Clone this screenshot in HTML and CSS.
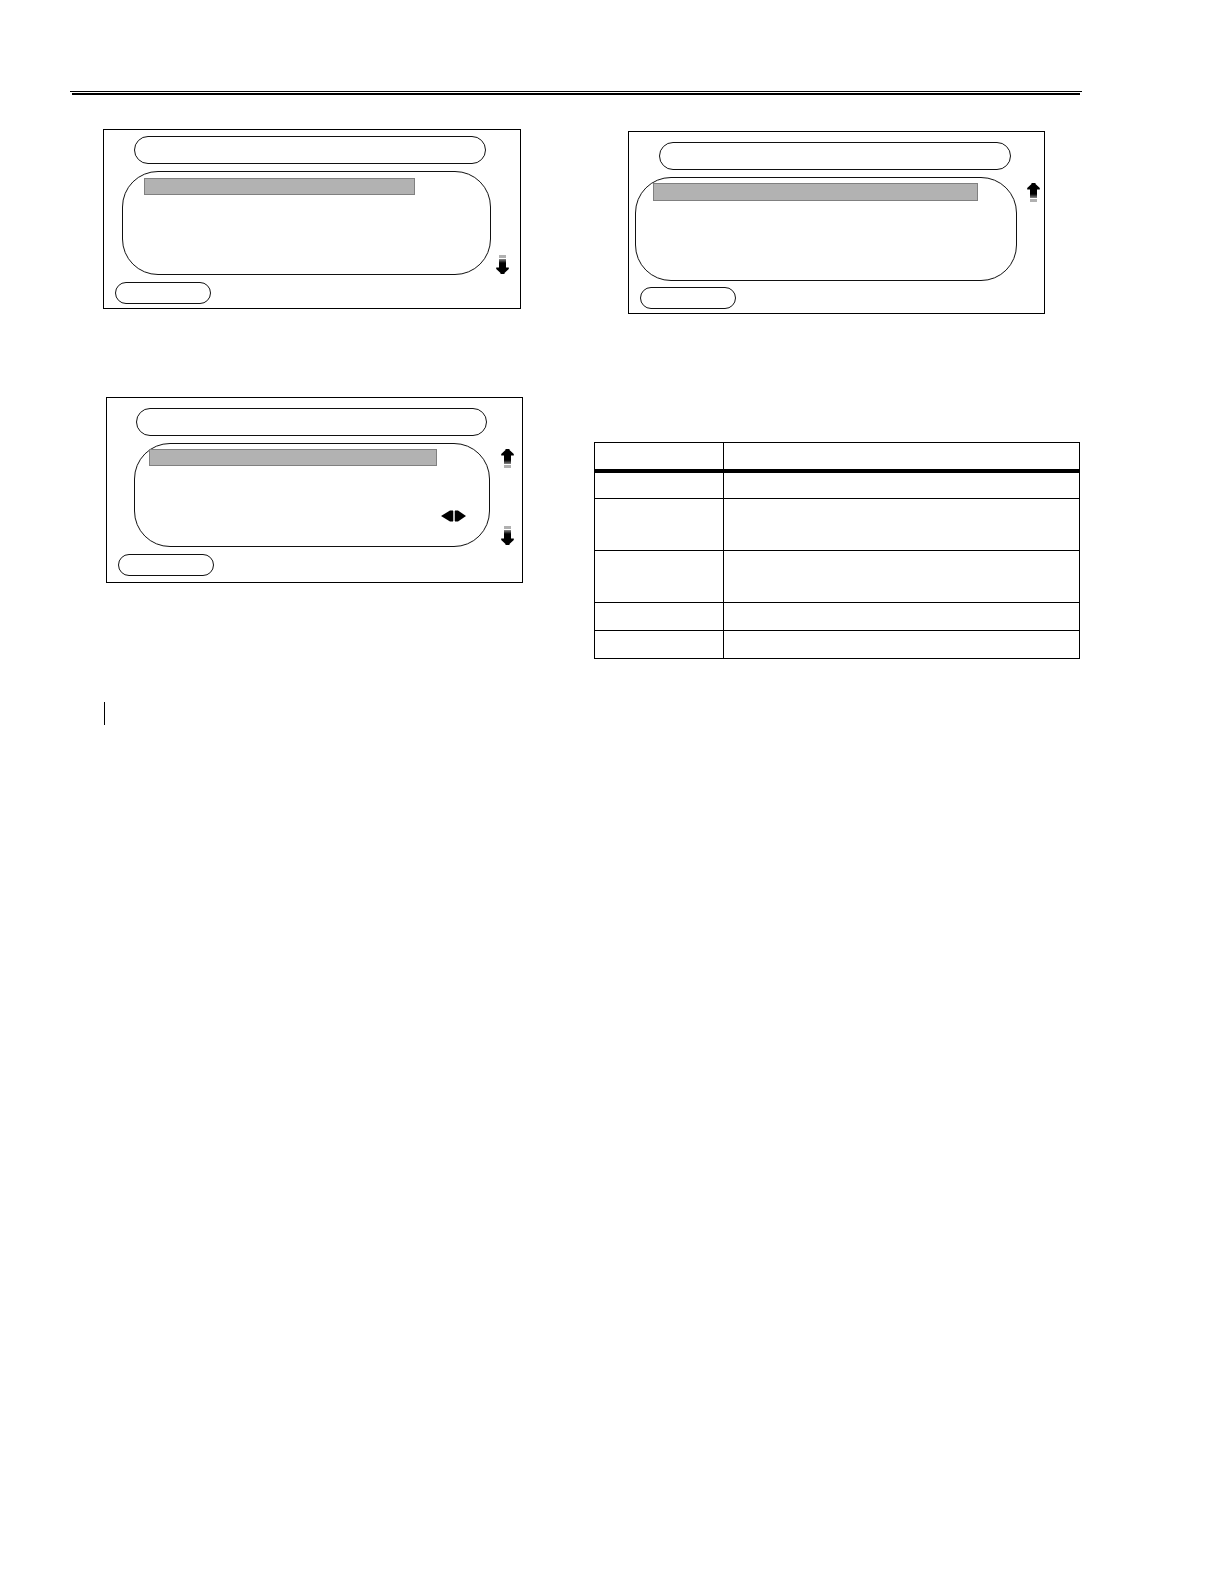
FILE: index.html
```html
<!DOCTYPE html>
<html lang="en">
<head>
    <meta charset="UTF-8">
    <meta name="viewport" content="width=device-width, initial-scale=1.0">
    <title>Display menus</title>
    <link rel="stylesheet" href="styles.css">
</head>

<body>
    <!-- shared arrow shapes -->
    <svg class="symbols" aria-hidden="true">
      <linearGradient id="fade" x1="0" y1="0" x2="0" y2="1">
        <stop offset="0" stop-color="#888"/>
        <stop offset="1" stop-color="#000"/>
      </linearGradient>
      <symbol id="down" viewBox="0 0 13 19">
        <rect x="3" y="0" width="7" height="3" fill="#b0b0b0"/>
        <rect x="3" y="4" width="7" height="4" fill="url(#fade)"/>
        <path d="M3 8H10V12.5H12.8V14L8.5 18V19H4.5V18L0.2 14V12.5H3Z"/>
      </symbol>
      <symbol id="up" viewBox="0 0 13 19">
        <g transform="rotate(180 6.5 9.5)">
          <rect x="3" y="0" width="7" height="3" fill="#b0b0b0"/>
          <rect x="3" y="4" width="7" height="4" fill="url(#fade)"/>
          <path d="M3 8H10V12.5H12.8V14L8.5 18V19H4.5V18L0.2 14V12.5H3Z"/>
        </g>
      </symbol>
    </svg>

    <header class="rule"></header>

    <main>
        <section class="left">
          <div class="panel first">
            <div class="title"></div>
            <div class="row">
              <div class="screen">
                <div class="highlight"></div>
              </div>
              <div class="arrows">
                <svg class="arrow bottom"><use href="#down"/></svg>
              </div>
            </div>
            <button class="softkey" type="button" aria-label="Close"></button>
          </div>

          <div class="panel third">
            <div class="title"></div>
            <div class="row">
              <div class="screen">
                <div class="highlight"></div>
                <svg class="sideways" viewBox="0 0 25 12">
                  <path d="M0 6L9 0.5H12V11.5H9ZM25 6L17 0.5H14V11.5H17Z"/>
                  <path d="M12 1H14V11H12Z" fill="#bbb"/>
                </svg>
              </div>
              <div class="arrows">
                <svg class="arrow"><use href="#up"/></svg>
                <svg class="arrow bottom"><use href="#down"/></svg>
              </div>
            </div>
            <button class="softkey" type="button" aria-label="Close"></button>
          </div>

          <div class="changebar"></div>
        </section>

        <section class="right">
          <div class="panel second">
            <div class="title"></div>
            <div class="row">
              <div class="screen">
                <div class="highlight"></div>
              </div>
              <div class="arrows">
                <svg class="arrow"><use href="#up"/></svg>
              </div>
            </div>
            <button class="softkey" type="button" aria-label="Close"></button>
          </div>

          <table>
            <thead>
              <tr><th class="name"></th><th></th></tr>
            </thead>
            <tbody>
              <tr class="short"><td></td><td></td></tr>
              <tr class="tall"><td></td><td></td></tr>
              <tr class="tall"><td></td><td></td></tr>
              <tr><td></td><td></td></tr>
              <tr><td></td><td></td></tr>
            </tbody>
          </table>
        </section>
    </main>
</body>
</html>
```
FILE: styles.css
```css
* {
  box-sizing: border-box;
}
body {
  margin: 0;
  padding: 91px 142px 0 70px;
  background-color: #fff;
  font-family: "Liberation Sans", Arial, sans-serif;
}

.symbols {
  position: absolute;
  width: 0;
  height: 0;
}

/* thin line over a thicker one */
.rule {
  border-top: 1px solid #000;
  padding: 1px 2px 0;
}
.rule:after {
  content: "";
  display: block;
  border-top: 2px solid #000;
}

main {
  display: grid;
  grid-template-columns: 421fr 486fr;
  column-gap: 70px;
  padding: 34px 2px 0 33px;
}

.panel {
  display: flex;
  flex-direction: column;
  border: 1px solid #000;
}
.title {
  height: 28px;
  border: 1px solid #111;
  border-radius: 14px;
}
.row {
  display: flex;
  height: 104px;
}
.screen {
  flex: 1;
  display: flex;
  flex-direction: column;
  justify-content: space-between;
  border: 1px solid #111;
  border-radius: 36px;
}
.highlight {
  height: 17px;
  background-color: #b2b2b2;
  border: 1px solid #808080;
}
.arrows {
  display: flex;
  flex-direction: column;
  padding: 6px 0 2px;
}
.arrow {
  width: 13px;
  height: 19px;
}
.bottom {
  margin-top: auto;
}
.sideways {
  align-self: flex-end;
  width: 25px;
  height: 12px;
  margin: 0 23px 24px 0;
}
.softkey {
  width: 96px;
  height: 22px;
  margin-left: 11px;
  padding: 0;
  background: none;
  border: 1px solid #111;
  border-radius: 11px;
}

.first {
  margin-right: 3px;
  padding: 6px 0 4px;
}
.first .title {
  margin: 0 34px 0 30px;
}
.first .row {
  margin: 7px 11px 7px 18px;
}
.first .arrows {
  margin-left: 5px;
  padding-bottom: 1px;
}
.first .highlight {
  margin: 6px 75px 0 21px;
}

.second {
  margin: 2px 35px 128px 34px;
  padding: 10px 0 4px;
}
.second .title {
  margin: 0 33px 0 30px;
}
.second .row {
  margin: 7px 4px 6px 6px;
}
.second .arrows {
  margin-left: 10px;
}
.second .highlight {
  height: 18px;
  margin: 5px 38px 0 17px;
}

.third {
  margin: 88px 1px 0 3px;
  padding: 10px 0 6px;
}
.third .title {
  margin: 0 35px 0 29px;
}
.third .row {
  margin: 7px 8px 7px 27px;
}
.third .arrows {
  margin-left: 11px;
}
.third .highlight {
  margin: 5px 52px 0 14px;
}

.changebar {
  height: 23px;
  margin: 119px 0 0 1px;
  border-left: 1px solid #000;
}

table {
  width: 100%;
  border-spacing: 0;
  border-top: 1px solid #000;
  border-left: 1px solid #000;
}
th, td {
  height: 28px;
  padding: 0;
  border-right: 1px solid #000;
  border-bottom: 1px solid #000;
}
th {
  height: 30px;
  border-bottom: 4px solid #000;
}
.name {
  width: 129px;
}
.short td {
  height: 26px;
}
.tall td {
  height: 52px;
}
```
